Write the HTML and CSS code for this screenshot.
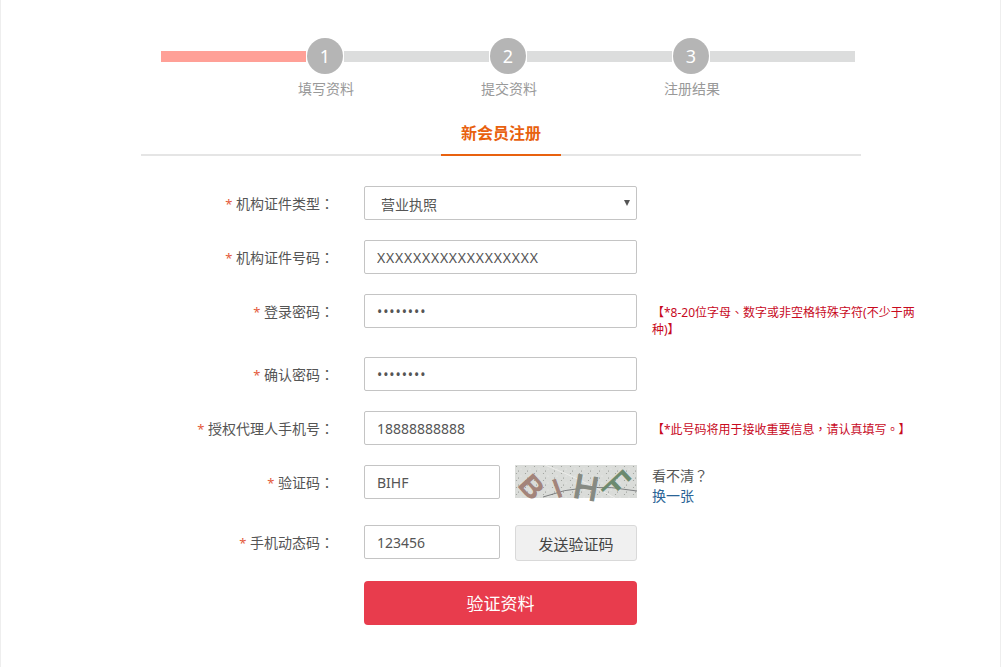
FILE: index.html
```html
<!DOCTYPE html>
<html lang="zh-CN">
<head>
    <meta charset="UTF-8">
    <title>新会员注册</title>
    <link rel="stylesheet" href="styles.css">
</head>
<body>
    <div class="page">
        <div class="steps">
            <div class="step-bar">
                <span class="bar bar-done"></span>
                <span class="circle">1</span>
                <span class="bar bar-mid"></span>
                <span class="circle">2</span>
                <span class="bar bar-mid"></span>
                <span class="circle">3</span>
                <span class="bar bar-end"></span>
            </div>
            <div class="step-labels">
                <span>填写资料</span>
                <span>提交资料</span>
                <span>注册结果</span>
            </div>
        </div>

        <div class="tabs">
            <div class="tab active">新会员注册</div>
        </div>

        <form class="form">
            <div class="row">
                <label class="label"><i>*</i> 机构证件类型<b lang="zh-TW">：</b></label>
                <div class="select-wrap">
                    <select class="field select">
                        <option>营业执照</option>
                    </select>
                </div>
            </div>
            <div class="row">
                <label class="label"><i>*</i> 机构证件号码<b lang="zh-TW">：</b></label>
                <input class="field field-wide" type="text" value="XXXXXXXXXXXXXXXXXX">
            </div>
            <div class="row row-hint">
                <label class="label"><i>*</i> 登录密码<b lang="zh-TW">：</b></label>
                <input class="field field-pass" type="password" value="12345678">
                <p class="hint" lang="zh-TW">【*8-20位字母、数字或非空格特殊字符(不少于两种)】</p>
            </div>
            <div class="row">
                <label class="label"><i>*</i> 确认密码<b lang="zh-TW">：</b></label>
                <input class="field field-pass" type="password" value="12345678">
            </div>
            <div class="row">
                <label class="label"><i>*</i> 授权代理人手机号<b lang="zh-TW">：</b></label>
                <input class="field" type="text" value="18888888888">
                <p class="hint hint-one" lang="zh-TW">【*此号码将用于接收重要信息，请认真填写。】</p>
            </div>
            <div class="row row-captcha">
                <label class="label"><i>*</i> 验证码<b lang="zh-TW">：</b></label>
                <input class="field field-short" type="text" value="BIHF">
                <svg class="captcha" width="122" height="33" viewBox="0 0 122 33">
                    <defs>
                        <pattern id="noise" width="9" height="7" patternUnits="userSpaceOnUse">
                            <rect width="9" height="7" fill="#dadcd9"/>
                            <circle cx="1.5" cy="1.5" r="0.6" fill="#9a9d98"/>
                            <circle cx="6" cy="4" r="0.5" fill="#f4f4f2"/>
                            <circle cx="3.5" cy="6" r="0.5" fill="#7f827d"/>
                        </pattern>
                    </defs>
                    <rect width="122" height="33" fill="url(#noise)"/>
                    <path d="M28 32 Q70 16 122 26" fill="none" stroke="#55585a" stroke-width="0.7"/>
                    <path d="M30 0 Q70 16 100 33" fill="none" stroke="#f0f0ee" stroke-width="0.8"/>
                    <text class="cap cap-b" transform="translate(2 20) rotate(48) scale(1.2 1)" font-size="28">B</text>
                    <text class="cap cap-b" transform="translate(42 33) rotate(-20)" font-size="26">I</text>
                    <text class="cap cap-h" transform="translate(57 32) rotate(10)" font-size="34">H</text>
                    <text class="cap cap-f" transform="translate(85 23) rotate(47) scale(.6 1)" font-size="42">F</text>
                </svg>
                <div class="refresh">
                    <span lang="zh-TW">看不清？</span>
                    <a href="#">换一张</a>
                </div>
            </div>
            <div class="row">
                <label class="label"><i>*</i> 手机动态码<b lang="zh-TW">：</b></label>
                <input class="field field-short" type="text" value="123456">
                <button class="send" type="button">发送验证码</button>
            </div>
            <div class="row row-submit">
                <button class="submit" type="button">验证资料</button>
            </div>
        </form>
    </div>
</body>
</html>
```

FILE: styles.css
```css
* {
    box-sizing: border-box;
}
html, body {
    margin: 0;
    padding: 0;
}
body {
    background: #fff;
    color: #555;
    font-family: "Noto Sans", "Noto Sans CJK SC", sans-serif;
    font-size: 14px;
    text-spacing-trim: space-all;
}
[lang="zh-TW"] {
    font-family: "Noto Sans", "Noto Sans CJK TC", sans-serif;
}
.page {
    width: 1001px;
    height: 667px;
    overflow: hidden;
    border-left: 1px solid #eee;
    border-right: 1px solid #eee;
    padding-top: 38px;
}

/* steps */
.steps {
    margin-left: 160px;
    width: 694px;
}
.step-bar {
    display: flex;
    align-items: center;
    height: 36px;
}
.bar {
    height: 11px;
    background: #dcdddd;
}
.bar-done {
    width: 145px;
    background: #ffa097;
}
.bar-mid {
    width: 145px;
}
.bar-end {
    flex: 1;
}
.circle {
    width: 36px;
    height: 36px;
    margin: 0 1px;
    border-radius: 50%;
    background: #b5b5b5;
    color: #fff;
    font-size: 18px;
    line-height: 37px;
    text-align: center;
}
.step-labels {
    display: flex;
    gap: 127px;
    margin: 5px 0 0 137px;
    color: #999;
    line-height: 20px;
}

/* tab title */
.tabs {
    width: 720px;
    height: 41px;
    margin: 16px 0 0 140px;
    border-bottom: 2px solid #e5e5e5;
    display: flex;
    justify-content: center;
}
.tab {
    width: 120px;
    height: 41px;
    color: #e8610f;
    font-size: 16px;
    font-weight: 700;
    line-height: 36px;
    text-align: center;
}
.tab.active {
    border-bottom: 2px solid #e8610f;
}

/* form */
.form {
    margin-top: 30px;
}
.row {
    display: flex;
    align-items: flex-start;
    margin-bottom: 20px;
}
.row-hint {
    height: 43px;
}
.row-captcha {
    height: 40px;
}
.row-submit {
    margin-left: 363px;
}
.label {
    width: 333px;
    height: 34px;
    margin-right: 30px;
    text-align: right;
    line-height: 36px;
    white-space: nowrap;
}
.label i {
    color: #e4593c;
    font-size: 13px;
    font-style: normal;
}
.label b {
    display: inline-block;
    width: 14px;
    font-weight: 400;
    line-height: 20px;
}
.field {
    width: 273px;
    height: 34px;
    padding: 0 12px;
    background: #fff;
    border: 1px solid #c4c4c4;
    border-radius: 2px;
    color: #555;
    font-family: inherit;
    font-size: 14px;
    outline: none;
}
.field-short {
    width: 136px;
}
.field-wide {
    letter-spacing: 0.78px;
}
.field-pass {
    letter-spacing: 0.9px;
}
.select-wrap {
    position: relative;
}
.select-wrap::after {
    content: "";
    position: absolute;
    top: 14px;
    right: 7px;
    border-top: 6px solid #555;
    border-left: 3px solid transparent;
    border-right: 3px solid transparent;
}
.select {
    appearance: none;
    display: block;
    padding: 2px 0 0 16px;
}
.hint {
    width: 265px;
    margin: 10px 0 0 15px;
    color: #c80a1e;
    font-size: 12px;
    line-height: 17px;
}
.hint-one {
    width: 280px;
}
.captcha {
    display: block;
    margin-left: 15px;
    overflow: visible;
}
.cap {
    font-family: "Liberation Sans", sans-serif;
    stroke-width: 1.2;
}
.cap-b {
    fill: #a3847a;
    stroke: #a3847a;
}
.cap-h {
    fill: #868a82;
    stroke: #868a82;
}
.cap-f {
    fill: #6c8a6e;
    stroke: #6c8a6e;
}
.refresh {
    display: flex;
    flex-direction: column;
    margin: 1px 0 0 15px;
    line-height: 20px;
    color: #555;
}
.refresh a {
    color: #2a6496;
    text-decoration: none;
}
.send {
    width: 122px;
    height: 36px;
    margin-left: 15px;
    background: #f0f0f0;
    border: 1px solid #d9d9d9;
    border-radius: 3px;
    color: #444;
    font-family: inherit;
    font-size: 15px;
}
.submit {
    width: 273px;
    height: 44px;
    padding-bottom: 2px;
    background: #e83c4d;
    border: none;
    border-radius: 4px;
    color: #fff;
    font-family: inherit;
    font-size: 17px;
}
```
